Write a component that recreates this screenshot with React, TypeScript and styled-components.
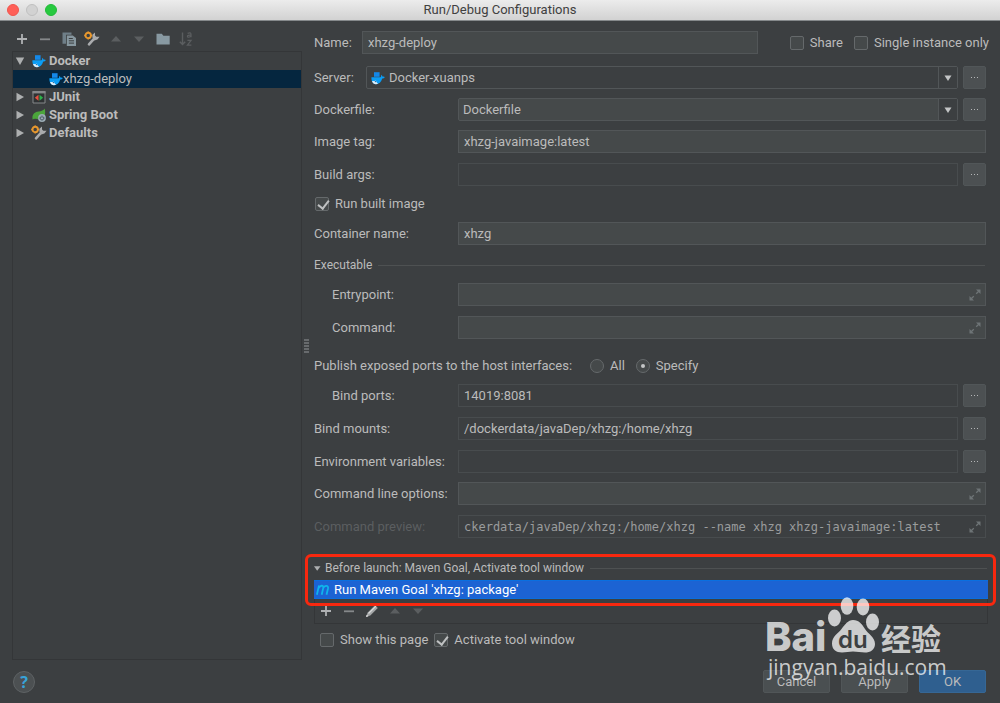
import React from "react";
import styled, { createGlobalStyle, css } from "styled-components";

const c = {
  bg: "#3c3f41",
  field: "#45494a",
  line: "#484c4e",
  fieldLine: "#525658",
  text: "#bbbbbb",
  dim: "#5b5e60",
  panelLine: "#343638",
};

const GlobalStyle = createGlobalStyle`
  * { box-sizing: border-box; }
  html { background: ${c.bg}; }
  body { margin: 0; }
  body, button, input, select {
    font-family: Roboto, "Liberation Sans", sans-serif;
    font-size: 13px;
    color: ${c.text};
  }
  button, input, select { margin: 0; padding: 0; }
  svg { display: block; flex: none; }
`;

/* ---------- window frame ---------- */

const Window = styled.div`
  position: relative;
  display: flex;
  flex-direction: column;
  min-height: 100vh;
  background: ${c.bg};
`;

const TitleBar = styled.header`
  position: relative;
  display: flex;
  align-items: center;
  justify-content: center;
  height: 21px;
  background: linear-gradient(#ececec, #d2d2d2);
  border-bottom: 1px solid #85898b;
`;

const Title = styled.h1`
  margin: 0;
  font-size: 13px;
  font-weight: 400;
  line-height: 20px;
  color: #404040;
`;

const Lights = styled.div`
  position: absolute;
  left: 7px;
  top: 4px;
  display: flex;
  gap: 7px;
`;

const Light = styled.button<{ $fill: string; $edge: string }>`
  width: 12px;
  height: 12px;
  border: 1px solid ${(p) => p.$edge};
  border-radius: 50%;
  background: ${(p) => p.$fill};
`;

const Body = styled.div`
  flex: 1;
  display: grid;
  grid-template-columns: 290px 12px minmax(0, 1fr);
  padding: 10px 11px 0 12px;
`;

/* ---------- sidebar ---------- */

const Sidebar = styled.aside`
  display: flex;
  flex-direction: column;
  gap: 4px;
`;

const Toolbar = styled.div`
  display: flex;
  justify-content: space-between;
  width: 180px;
  margin-left: 2px;
`;

const IconButton = styled.button`
  display: flex;
  align-items: center;
  justify-content: center;
  width: 16px;
  height: 16px;
  border: 0;
  background: none;
`;

const Tree = styled.ul`
  flex: 1;
  margin: 0;
  padding: 0;
  list-style: none;
  border: 1px solid ${c.panelLine};
`;

const TreeRow = styled.button<{ $child?: boolean; $selected?: boolean }>`
  display: flex;
  align-items: center;
  gap: ${(p) => (p.$child ? 0 : 3)}px;
  width: 100%;
  height: 18px;
  padding-left: ${(p) => (p.$child ? 35 : 2)}px;
  border: 0;
  background: ${(p) => (p.$selected ? "#05263f" : "none")};
  font-weight: ${(p) => (p.$child ? 400 : 700)};
  line-height: 18px;
  text-align: left;
`;

const Twisty = styled.span`
  display: flex;
  justify-content: center;
  width: 10px;
  margin-right: 3px;
`;

const TreeIcon = styled.span`
  display: flex;
  justify-content: center;
  width: 15px;
`;

const Grip = styled.div`
  align-self: center;
  width: 5px;
  height: 14px;
  margin-left: 2px;
  background: radial-gradient(circle at 1px 1px, #7a7d7f 20%, transparent 60%) 0 0 / 2px 3px;
`;

/* ---------- form ---------- */

const Form = styled.form`
  display: flex;
  flex-direction: column;
`;

const Row = styled.div<{ $gap?: number; $wide?: boolean }>`
  display: flex;
  align-items: center;
  height: 23px;
  margin-top: ${(p) => p.$gap ?? 10}px;
  margin-right: ${(p) => (p.$wide ? 0 : 3)}px;
`;

const LineRow = styled(Row)`
  height: 16px;
`;

const Label = styled.label<{ $width?: number; $indent?: boolean; $dim?: boolean }>`
  flex: none;
  width: ${(p) => p.$width ?? 144}px;
  padding-left: ${(p) => (p.$indent ? 18 : 0)}px;
  line-height: 16px;
  color: ${(p) => (p.$dim ? c.dim : c.text)};
`;

const Box = styled.div<{ $plain?: boolean; $round?: boolean }>`
  flex: 1;
  display: flex;
  align-items: center;
  min-width: 0;
  height: 23px;
  border: 1px solid ${(p) => (p.$plain && !p.$round ? c.line : c.fieldLine)};
  border-radius: ${(p) => (p.$round ? 2 : 0)}px;
  background: ${(p) => (p.$plain ? c.bg : c.field)};
`;

const bare = css`
  flex: 1;
  min-width: 0;
  height: 21px;
  border: 0;
  outline: 0;
  background: none;
`;

const TextInput = styled.input<{ $mono?: boolean }>`
  ${bare}
  padding: 0 5px;
  ${(p) =>
    p.$mono &&
    css`
      font-family: "DejaVu Sans Mono", monospace;
      font-size: 12px;
      color: #9a9c9d;
    `}
`;

const Select = styled.select`
  ${bare}
  appearance: none;
  padding-left: 4px;
`;

const SelectIcon = styled.span`
  padding-left: 4px;
`;

const Arrow = styled.span`
  display: flex;
  align-items: center;
  justify-content: center;
  width: 19px;
  height: 21px;
  border-left: 1px solid ${c.fieldLine};
  background: ${c.bg};
`;

const ExpandButton = styled(IconButton)`
  margin-right: 2px;
`;

const MoreButton = styled.button`
  width: 23px;
  height: 23px;
  margin-left: 5px;
  display: flex;
  align-items: center;
  justify-content: center;
  gap: 2px;
  border: 1px solid #515658;
  border-radius: 2px;
  background: #4c5052;
`;

const Dot = styled.i`
  width: 1px;
  height: 1px;
  background: #b4b6b7;
`;

const Check = styled.label<{ $first?: number }>`
  display: flex;
  align-items: center;
  gap: 6px;
  flex: none;
  margin-left: ${(p) => p.$first ?? 0}px;
  line-height: 16px;
`;

const CheckInput = styled.input`
  appearance: none;
  position: relative;
  width: 14px;
  height: 14px;
  border: 1px solid #65696b;
  border-radius: ${(p) => (p.type === "radio" ? "50%" : "2px")};
  background: ${c.field};

  &[type="checkbox"]:checked::after {
    content: "";
    position: absolute;
    left: 4px;
    top: 0;
    width: 5px;
    height: 9px;
    border: solid #bfc1c2;
    border-width: 0 2px 2px 0;
    transform: rotate(38deg);
  }

  &[type="radio"]:checked::after {
    content: "";
    position: absolute;
    inset: 4px;
    border-radius: 50%;
    background: #c4c6c7;
  }
`;

const Heading = styled.h2`
  display: flex;
  align-items: center;
  gap: 6px;
  width: 100%;
  margin: 0;
  padding-right: 1px;
  font-size: 12px;
  font-weight: 400;
  line-height: 16px;

  &::after {
    content: "";
    flex: 1;
    height: 1px;
    background: #4e5152;
  }
`;

/* ---------- before launch ---------- */

const Launch = styled.section`
  position: relative;
  margin: 22px 1px 0 0;
`;

const LaunchToggle = styled.button`
  display: flex;
  align-items: center;
  gap: 4px;
  border: 0;
  background: none;
  font-size: 12px;
  line-height: 16px;
`;

const TaskPanel = styled.div`
  margin-top: 4px;
`;

const Task = styled.button`
  display: flex;
  align-items: center;
  gap: 4px;
  width: 100%;
  height: 19px;
  padding-left: 2px;
  border: 1px solid #0a6fe0;
  border-width: 1px 0;
  background: #1c63d3;
  color: #fff;
`;

const TaskTools = styled.div`
  display: flex;
  gap: 7px;
  padding: 4px 0 4px 3px;
  border: 1px solid ${c.panelLine};
  border-top: 0;
`;

const Highlight = styled.div`
  position: absolute;
  inset: -6px -8px auto -9px;
  height: 52px;
  border: 3px solid #f8280f;
  border-radius: 6px;
  pointer-events: none;
`;

/* ---------- footer ---------- */

const Footer = styled.footer`
  display: flex;
  align-items: center;
  gap: 11px;
  height: 43px;
  padding: 0 14px 0 13px;
`;

const Help = styled.button`
  width: 22px;
  height: 22px;
  margin-right: auto;
  border: 1px solid #5e6264;
  border-radius: 50%;
  background: #4c5052;
  color: #38a3d9;
  font-family: "Noto Sans", sans-serif;
  font-size: 16px;
  font-weight: 700;
  line-height: 20px;
`;

const Action = styled.button<{ $primary?: boolean }>`
  width: 67px;
  height: 23px;
  border: 1px solid ${(p) => (p.$primary ? "#366795" : "#515658")};
  border-radius: 2px;
  background: ${(p) => (p.$primary ? "#2f5f8f" : "#4a4f51")};
`;

const Watermark = styled.svg`
  position: absolute;
  right: 44px;
  bottom: 21px;
  pointer-events: none;
`;

/* ---------- icons ---------- */

const Plus = () => (
  <svg width="16" height="16" viewBox="0 0 16 16"><path d="M8 3v10M3 8h10" stroke="#afb1b3" strokeWidth="1.8" /></svg>
);
const Minus = () => (
  <svg width="16" height="16" viewBox="0 0 16 16"><path d="M3 8.3h10" stroke="#85888a" strokeWidth="1.8" /></svg>
);
const Triangle = ({ dir, fill = c.dim }: { dir: "up" | "down"; fill?: string }) => (
  <svg width="16" height="16" viewBox="0 0 16 16">
    <path d={dir === "up" ? "M3 10.5 8 5l5 5.5z" : "M3 5.5 8 11l5-5.5z"} fill={fill} />
  </svg>
);
const Copy = () => (
  <svg width="16" height="16" viewBox="0 0 16 16">
    <path d="M1.5 1.5h9v2.2H5v9H1.5z" fill="#6f7f88" />
    <path d="M5.8 4.5h6L15 7v8H5.8z" fill="#87979f" />
    <path d="M7.8 7.5h4M7.8 9.8h5.2M7.8 12.1h5.2" stroke="#3c3f41" strokeWidth="1" />
  </svg>
);
const Wrench = () => (
  <svg width="16" height="16" viewBox="0 0 16 16">
    <path d="M5 13.4 10.6 7.2" stroke="#a9abad" strokeWidth="2.6" strokeLinecap="round" />
    <path d="M8.4 6.6V3.8L11 1.4v3l1.3 1.3h3.3L13.4 8.6 10.4 9.4z" fill="#a9abad" />
    <circle cx="4.2" cy="4.4" r="2.7" fill="none" stroke="#e8982e" strokeWidth="1.9" />
    <path d="M4.2.4v1.6M4.2 6.8v1.6M.2 4.4H2M6.6 4.4h1.6" stroke="#e8982e" strokeWidth="1.5" />
  </svg>
);
const Folder = () => (
  <svg width="16" height="16" viewBox="0 0 16 16"><path d="M1.5 2.8h5.3l1.6 2h6.3v8.6H1.5z" fill="#8899a2" /></svg>
);
const Sort = () => (
  <svg width="16" height="16" viewBox="0 0 16 16" fill="none" stroke={c.dim}>
    <path d="M4.5 1.5v12M1.8 10.8l2.7 2.8 2.7-2.8" strokeWidth="1.4" />
    <path d="M9.6 2.4q3.4-1.4 3.4 1v2.8M13 4.2q-3.6-.2-3.6 1.1 0 1.9 3.6 0M9.4 9.4h3.7l-3.7 4.7h4" strokeWidth="1.2" />
  </svg>
);
const Whale = () => (
  <svg width="14" height="14" viewBox="0 0 14 14">
    <path d="M3 1.2h5.6v4.6H3z" fill="#1488e8" />
    <path d="M.4 6.3h9.2c.6-.6.7-1.6.4-2.5 1.1.5 1.5 1.2 1.6 1.9.8-.2 1.6 0 2.2.4-.5 1-1.5 1.5-2.6 1.5C10.2 11.3 8 13.2 5 13.2 2 13.2.2 10.5.4 6.3z" fill="#0b9df5" />
    <path d="M1 9.9c1.5.4 2.8.2 3.7-.5.6 1.5 1.500 2.900 2.500 3.300-2.900 1.200-5.200.2-6.200-2.800z" fill="#dceefa" />
    <circle cx="4.4" cy="10.6" r=".7" fill="#1d5f94" />
  </svg>
);
const JUnit = () => (
  <svg width="14" height="14" viewBox="0 0 14 14">
    <path d="M1 1.5h12V13H1z" fill="#2f3234" stroke="#85888a" />
    <path d="M.5 1h13v2.4H.5z" fill="#85888a" />
    <path d="M6.500 4.800v6L2.800 7.800z" fill="#e8503f" />
    <path d="M7.500 4.800v6l3.700-3z" fill="#2bb34b" />
  </svg>
);
const Spring = () => (
  <svg width="14" height="14" viewBox="0 0 14 14">
    <path d="M.6 11.5C-.3 6.5 2.5 4 6.5 3.5 9.5 3.2 11.5 2.3 12.7.5c1.2 4.5.2 9.5-4.5 10.8-2 .5-3.5-.6-5.2-.6-1 0-1.8.5-2.4.8z" fill="#4ba53b" />
    <circle cx="10" cy="10" r="3.9" fill="#9aabb5" />
    <path d="M8.7 8.7a1.9 1.9 0 1 0 2.6 0M10 7.6v2.2" fill="none" stroke="#3c4a52" strokeWidth=".9" />
  </svg>
);
const TwistyIcon = ({ open }: { open?: boolean }) => (
  <svg width="10" height="10" viewBox="0 0 10 10">
    <path d={open ? "M.8 1.5h8.4L5 9z" : "M1.5.8v8.4L9 5z"} fill="#adafb0" />
  </svg>
);
const Caret = () => (
  <svg width="8" height="8" viewBox="0 0 8 8"><path d="M.5 1.5h7L4 7z" fill="#c3c5c6" /></svg>
);
const SmallCaret = () => (
  <svg width="7" height="7" viewBox="0 0 7 7"><path d="M0 1.2h6.5L3.2 5.8z" fill="#adafb0" /></svg>
);
const Expand = () => (
  <svg width="12" height="12" viewBox="0 0 12 12" fill="#6e7476" stroke="#6e7476">
    <path d="M7 .5h4.5V5zM.5 7v4.5H5z" stroke="none" />
    <path d="M7.2 4.8 9.8 2.2M4.8 7.2 2.2 9.8" strokeWidth="1.3" />
  </svg>
);
const Pencil = () => (
  <svg width="16" height="16" viewBox="0 0 16 16">
    <path d="M2.3 13.8 3.5 9.8 11 2.3l2.8 2.6-7.5 7.6z" fill="#a4a6a7" />
    <path d="m4.5 10.5 7.5-7.3" stroke="#dadbdb" strokeWidth="1.1" />
    <path d="m2 14 .7-2.3 1.7 1.6z" fill="#eeeeee" />
  </svg>
);
const Maven = () => (
  <svg width="14" height="14" viewBox="0 0 14 14" fill="none" stroke="#0fb4ec" strokeWidth="1.8">
    <path d="M.9 11.8 3 2.5M2.4 5.5C3.6 2.2 8 1.6 7.2 5L5.7 11.8M7 5.5c1.3-3.3 5.8-3.8 5 0l-1.5 6.3" />
  </svg>
);

/* ---------- parts ---------- */

const More = ({ name }: { name: string }) => (
  <MoreButton type="button" aria-label={`Browse ${name}`}><Dot /><Dot /><Dot /></MoreButton>
);

type FieldProps = {
  id: string;
  label: string;
  value?: string;
  gap?: number;
  indent?: boolean;
  dim?: boolean;
  plain?: boolean;
  more?: boolean;
  expand?: boolean;
};

const Field = ({ id, label, value = "", gap, indent, dim, plain, more, expand }: FieldProps) => (
  <Row $gap={gap}>
    <Label htmlFor={id} $indent={indent} $dim={dim}>{label}</Label>
    <Box $plain={plain}>
      <TextInput id={id} defaultValue={value} $mono={dim} readOnly={dim} />
      {expand && <ExpandButton type="button" aria-label={`Expand ${label}`}><Expand /></ExpandButton>}
    </Box>
    {more && <More name={label} />}
  </Row>
);

export default function App() {
  return (
    <Window>
      <GlobalStyle />
      <TitleBar>
        <Lights>
          <Light aria-label="Close" $fill="#ff5f57" $edge="#f0554d" />
          <Light aria-label="Minimize" $fill="#d2d2d2" $edge="#c0c0c0" />
          <Light aria-label="Zoom" $fill="#27c93f" $edge="#22bb39" />
        </Lights>
        <Title>Run/Debug Configurations</Title>
      </TitleBar>

      <Body>
        <Sidebar>
          <Toolbar>
            <IconButton aria-label="Add"><Plus /></IconButton>
            <IconButton aria-label="Remove"><Minus /></IconButton>
            <IconButton aria-label="Copy"><Copy /></IconButton>
            <IconButton aria-label="Edit defaults"><Wrench /></IconButton>
            <IconButton aria-label="Move up"><Triangle dir="up" /></IconButton>
            <IconButton aria-label="Move down"><Triangle dir="down" /></IconButton>
            <IconButton aria-label="New folder"><Folder /></IconButton>
            <IconButton aria-label="Sort"><Sort /></IconButton>
          </Toolbar>
          <Tree>
            <li><TreeRow><Twisty><TwistyIcon open /></Twisty><TreeIcon><Whale /></TreeIcon>Docker</TreeRow></li>
            <li><TreeRow $child $selected><TreeIcon><Whale /></TreeIcon>xhzg-deploy</TreeRow></li>
            <li><TreeRow><Twisty><TwistyIcon /></Twisty><TreeIcon><JUnit /></TreeIcon>JUnit</TreeRow></li>
            <li><TreeRow><Twisty><TwistyIcon /></Twisty><TreeIcon><Spring /></TreeIcon>Spring Boot</TreeRow></li>
            <li><TreeRow><Twisty><TwistyIcon /></Twisty><TreeIcon><Wrench /></TreeIcon>Defaults</TreeRow></li>
          </Tree>
        </Sidebar>

        <Grip />

        <Form onSubmit={(e) => e.preventDefault()}>
          <Row $gap={0} $wide>
            <Label htmlFor="name" $width={48}>Name:</Label>
            <Box><TextInput id="name" defaultValue="xhzg-deploy" /></Box>
            <Check $first={32}><CheckInput type="checkbox" />Share</Check>
            <Check $first={11}><CheckInput type="checkbox" />Single instance only</Check>
          </Row>

          <Row $gap={12}>
            <Label htmlFor="server" $width={52}>Server:</Label>
            <Box $plain $round>
              <SelectIcon><Whale /></SelectIcon>
              <Select id="server"><option>Docker-xuanps</option></Select>
              <Arrow><Caret /></Arrow>
            </Box>
            <More name="servers" />
          </Row>
          <Row $gap={9}>
            <Label htmlFor="dockerfile">Dockerfile:</Label>
            <Box $round>
              <Select id="dockerfile"><option>Dockerfile</option></Select>
              <Arrow><Caret /></Arrow>
            </Box>
            <More name="Dockerfile" />
          </Row>
          <Field id="tag" label="Image tag:" value="xhzg-javaimage:latest" gap={9} />
          <Field id="args" label="Build args:" plain more />
          <LineRow><Check $first={1}><CheckInput type="checkbox" defaultChecked />Run built image</Check></LineRow>
          <Field id="container" label="Container name:" value="xhzg" />

          <LineRow $gap={12}><Heading>Executable</Heading></LineRow>
          <Field id="entry" label="Entrypoint:" indent expand />
          <Field id="command" label="Command:" indent expand />

          <LineRow $gap={19}>
            <Label as="span" $width={276}>Publish exposed ports to the host interfaces:</Label>
            <Check><CheckInput type="radio" name="ports" />All</Check>
            <Check $first={11}><CheckInput type="radio" name="ports" defaultChecked />Specify</Check>
          </LineRow>
          <Field id="ports" label="Bind ports:" value="14019:8081" indent plain more />
          <Field id="mounts" label="Bind mounts:" value="/dockerdata/javaDep/xhzg:/home/xhzg" plain more />
          <Field id="env" label="Environment variables:" plain more />
          <Field id="options" label="Command line options:" gap={9} expand />
          <Field
            id="preview"
            label="Command preview:"
            value="ckerdata/javaDep/xhzg:/home/xhzg --name xhzg xhzg-javaimage:latest"
            dim
            plain
            expand
          />

          <Launch>
            <Heading>
              <LaunchToggle type="button"><SmallCaret />Before launch: Maven Goal, Activate tool window</LaunchToggle>
            </Heading>
            <TaskPanel>
              <Task type="button"><Maven />Run Maven Goal 'xhzg: package'</Task>
              <TaskTools>
                <IconButton type="button" aria-label="Add task"><Plus /></IconButton>
                <IconButton type="button" aria-label="Remove task"><Minus /></IconButton>
                <IconButton type="button" aria-label="Edit task"><Pencil /></IconButton>
                <IconButton type="button" aria-label="Move task up"><Triangle dir="up" /></IconButton>
                <IconButton type="button" aria-label="Move task down"><Triangle dir="down" /></IconButton>
              </TaskTools>
            </TaskPanel>
            <Highlight />
          </Launch>
          <LineRow $gap={8}>
            <Check $first={6}><CheckInput type="checkbox" />Show this page</Check>
            <Check $first={6}><CheckInput type="checkbox" defaultChecked />Activate tool window</Check>
          </LineRow>
        </Form>
      </Body>

      <Footer>
        <Help aria-label="Help">?</Help>
        <Action>Cancel</Action>
        <Action>Apply</Action>
        <Action $primary>OK</Action>
      </Footer>

      <Watermark width="190" height="86" viewBox="0 0 190 86" fill="#fff" fillOpacity=".74">
        <text x="-1" y="55" fontFamily="Inter, sans-serif" fontSize="40" fontWeight="800">Bai</text>
        <ellipse cx="68.5" cy="22" rx="6.5" ry="8.5" />
        <ellipse cx="81" cy="10" rx="6.3" ry="8.8" />
        <ellipse cx="97" cy="11" rx="6.3" ry="8.5" />
        <ellipse cx="106.5" cy="26" rx="6.5" ry="8.5" />
        <path d="M87 24c6 0 9 4 12 9s10 8 10 15c0 6-5 8.5-10 8.5-4 0-8-1-12-1s-7 1-11 1c-6 0-10-3-10-9 0-7 6-10 9.5-14.5S82 24 87 24z" />
        <text x="72" y="52" fontFamily="Inter, sans-serif" fontSize="24" fontWeight="600" fill="#3c3f41" fillOpacity="1">du</text>
        <text x="115" y="54" fontFamily="'Noto Sans CJK SC', sans-serif" fontSize="30" fontWeight="700">经验</text>
        <text x="2" y="79" fontFamily="'Open Sans', sans-serif" fontSize="21" fontWeight="500">jingyan.baidu.com</text>
      </Watermark>
    </Window>
  );
}
